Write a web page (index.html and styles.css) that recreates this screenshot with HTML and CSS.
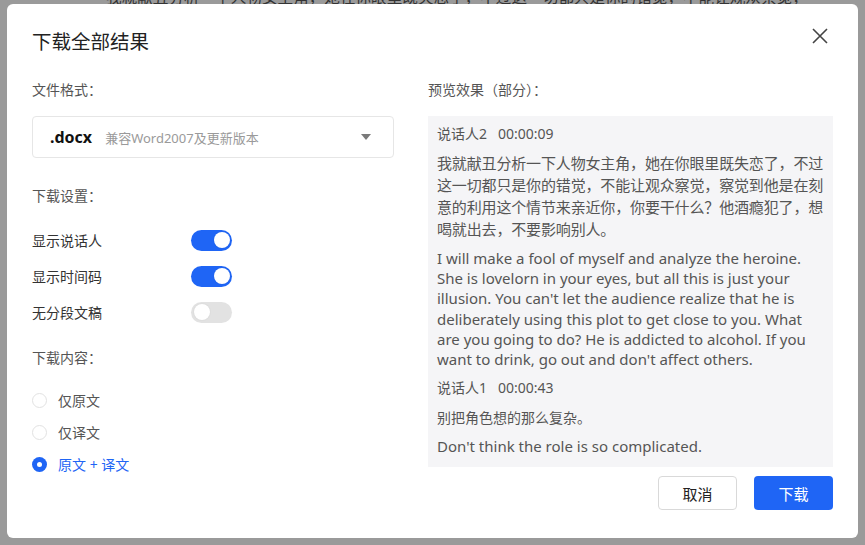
FILE: index.html
```html
<!DOCTYPE html>
<html lang="zh-CN">
<head>
  <meta charset="UTF-8">
  <meta name="viewport" content="width=device-width, initial-scale=1.0">
  <title>下载全部结果</title>
  <link rel="stylesheet" href="styles.css">
</head>
<body>
  <div class="page-behind">我就献丑分析一下人物女主角，她在你眼里既失恋了，不过这一切都只是你的错觉，不能让观众察觉，察觉</div>

  <div class="dialog">
    <div class="dialog-header">
      <h1>下载全部结果</h1>
      <button class="close-btn" title="关闭">
        <svg width="18" height="18" viewBox="0 0 18 18"><path d="M2 2 L16 16 M16 2 L2 16" stroke="#444" stroke-width="1.6" fill="none"/></svg>
      </button>
    </div>

    <div class="dialog-body">
      <div class="settings">
        <div class="section-label">文件格式：</div>
        <div class="format-select">
          <span class="format-ext">.docx</span>
          <span class="format-desc">兼容Word2007及更新版本</span>
          <span class="caret"></span>
        </div>

        <div class="section-label spaced">下载设置：</div>
        <div class="switch-list">
          <div class="switch-row">
            <span class="switch-label">显示说话人</span>
            <span class="switch on"><span class="knob"></span></span>
          </div>
          <div class="switch-row">
            <span class="switch-label">显示时间码</span>
            <span class="switch on"><span class="knob"></span></span>
          </div>
          <div class="switch-row">
            <span class="switch-label">无分段文稿</span>
            <span class="switch"><span class="knob"></span></span>
          </div>
        </div>

        <div class="section-label content-label">下载内容：</div>
        <div class="radio-list">
          <label class="radio-row"><span class="radio"></span>仅原文</label>
          <label class="radio-row"><span class="radio"></span>仅译文</label>
          <label class="radio-row checked"><span class="radio"></span>原文 + 译文</label>
        </div>
      </div>

      <div class="preview">
        <div class="section-label">预览效果（部分）：</div>
        <div class="preview-box">
          <div class="speaker">说话人2&nbsp;&nbsp;&nbsp;00:00:09</div>
          <p class="zh zh-long">我就献丑分析一下人物女主角，她在你眼里既失恋了，不过<br>这一切都只是你的错觉，不能让观众察觉，察觉到他是在刻<br>意的利用这个情节来亲近你，你要干什么？他酒瘾犯了，想<br>喝就出去，不要影响别人。</p>
          <p class="en">I will make a fool of myself and analyze the heroine. She is lovelorn in your eyes, but all this is just your illusion. You can't let the audience realize that he is deliberately using this plot to get close to you. What are you going to do? He is addicted to alcohol. If you want to drink, go out and don't affect others.</p>
          <div class="speaker">说话人1&nbsp;&nbsp;&nbsp;00:00:43</div>
          <p class="zh">别把角色想的那么复杂。</p>
          <p class="en">Don't think the role is so complicated.</p>
        </div>
        <div class="button-group">
          <button class="btn-cancel">取消</button>
          <button class="btn-primary">下载</button>
        </div>
      </div>
    </div>
  </div>
</body>
</html>
```

FILE: styles.css
```css
* {
  margin: 0;
  padding: 0;
  box-sizing: border-box;
}

body {
  width: 865px;
  height: 545px;
  overflow: hidden;
  position: relative;
  background: #9a9a9a;
  font-family: "Noto Sans", "Noto Sans CJK SC", sans-serif;
  color: #333;
  padding: 4px 7px 0;
}

/* text of the page under the mask */
.page-behind {
  position: absolute;
  top: -15px;
  left: 106px;
  width: 700px;
  white-space: nowrap;
  overflow: hidden;
  font-family: "Noto Sans CJK SC", sans-serif;
  font-size: 15.6px;
  line-height: 22px;
  color: #333;
}

.dialog {
  position: relative;
  width: 851px;
  height: 534px;
  background: #fff;
  border-radius: 6px;
  padding: 24px 25px 0;
}

.dialog-header {
  display: flex;
  justify-content: space-between;
  align-items: flex-start;
}

.dialog-header h1 {
  font-size: 19.5px;
  line-height: 28px;
  font-weight: 400;
  color: #222;
}

.close-btn {
  width: 20px;
  height: 20px;
  margin: -2px 3px 0 0;
  border: none;
  background: none;
  display: flex;
  align-items: center;
  justify-content: center;
  cursor: pointer;
}

.dialog-body {
  display: grid;
  grid-template-columns: 362px 405px;
  column-gap: 34px;
  margin-top: 24px;
}

.section-label {
  font-size: 14px;
  line-height: 20px;
  color: #555;
}

.section-label.spaced {
  margin-top: 28px;
}

.section-label.content-label {
  margin-top: 18px;
}

.format-select {
  margin-top: 16px;
  height: 42px;
  border: 1px solid #e6e6e6;
  border-radius: 4px;
  display: flex;
  align-items: center;
  padding: 0 22px 0 17px;
}

.format-ext {
  font-size: 16px;
  font-weight: 700;
  color: #111;
}

.format-desc {
  margin-left: 13px;
  font-size: 13px;
  color: #9a9a9a;
  flex: 1;
}

.caret {
  width: 0;
  height: 0;
  border-left: 5px solid transparent;
  border-right: 5px solid transparent;
  border-top: 6px solid #7a7a7a;
}

.switch-list {
  margin-top: 16px;
}

.switch-row {
  display: flex;
  align-items: center;
  height: 36px;
  font-size: 14px;
  color: #333;
}

.switch-label {
  width: 159px;
}

.switch {
  position: relative;
  width: 41px;
  height: 21px;
  border-radius: 11px;
  background: #e2e2e2;
}

.switch.on {
  background: #1f65f5;
}

.switch .knob {
  position: absolute;
  top: 2.5px;
  left: 2.5px;
  width: 16px;
  height: 16px;
  border-radius: 50%;
  background: #fff;
  box-shadow: 0 0 2px rgba(0, 0, 0, 0.08);
}

.switch.on .knob {
  left: 22.5px;
}

.radio-list {
  margin-top: 16px;
}

.radio-row {
  display: flex;
  align-items: center;
  height: 32px;
  font-size: 14px;
  color: #555;
}

.radio {
  width: 15px;
  height: 15px;
  border-radius: 50%;
  border: 1px solid #e2e2e2;
  margin-right: 11px;
  position: relative;
}

.radio-row.checked {
  color: #1f65f5;
}

.radio-row.checked .radio {
  border: none;
  background: #1f65f5;
}

.radio-row.checked .radio::after {
  content: "";
  position: absolute;
  top: 5px;
  left: 5px;
  width: 5px;
  height: 5px;
  border-radius: 50%;
  background: #fff;
}

.preview-box {
  margin-top: 16px;
  height: 351px;
  background: #f5f5f7;
  padding: 8px 9px;
  color: #555;
}

.speaker {
  font-size: 14px;
  line-height: 20px;
}

.preview-box .speaker + .zh {
  margin-top: 8px;
}

.zh {
  font-family: "Noto Sans CJK SC", sans-serif;
  font-size: 14px;
  line-height: 22px;
}

.zh-long {
  font-size: 15px;
  letter-spacing: -0.15px;
  white-space: nowrap;
  margin-top: 9px;
}

.en {
  font-size: 15px;
  line-height: 20.2px;
  margin-top: 3px;
  margin-bottom: 9px;
}

.zh + .en {
  margin-top: 8px;
}

.button-group {
  display: flex;
  justify-content: flex-end;
  gap: 17px;
  margin-top: 9px;
}

button.btn-cancel,
button.btn-primary {
  width: 79px;
  height: 34px;
  border-radius: 4px;
  font-size: 15px;
  font-family: inherit;
  cursor: pointer;
}

.btn-cancel {
  background: #fff;
  border: 1px solid #d9d9d9;
  color: #222;
}

.btn-primary {
  background: #1f65f5;
  border: none;
  color: #fff;
}
```
